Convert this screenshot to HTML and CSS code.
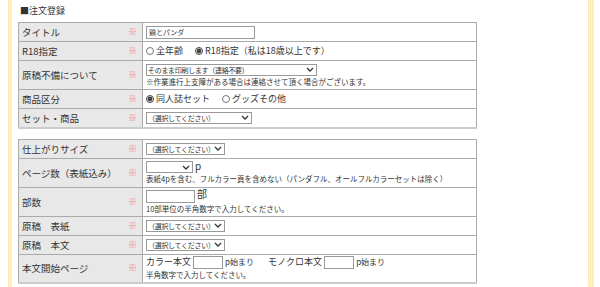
FILE: index.html
```html
<!DOCTYPE html>
<html lang="ja">
<head>
    <meta charset="UTF-8">
    <meta name="viewport" content="width=device-width, initial-scale=1.0">
    <title>注文登録</title>
    <link rel="stylesheet" href="styles.css">
</head>
<body>
    <div class="page">
        <div class="stripe stripe-left"></div>
        <div class="main">
            <h2 class="heading">■注文登録</h2>

            <table class="form-table">
                <tr class="row-s">
                    <th>タイトル<span class="req">※</span></th>
                    <td><input type="text" class="txt-title" value="鶏とパンダ"></td>
                </tr>
                <tr class="row-s">
                    <th>R18指定<span class="req">※</span></th>
                    <td>
                        <label class="radio"><input type="radio" name="r18">全年齢</label>
                        <label class="radio"><input type="radio" name="r18" checked>R18指定（私は18歳以上です）</label>
                    </td>
                </tr>
                <tr class="row-l">
                    <th>原稿不備について<span class="req">※</span></th>
                    <td>
                        <select class="sel-wide">
                            <option>そのまま印刷します（連絡不要）</option>
                        </select>
                        <div class="note">※作業進行上支障がある場合は連絡させて頂く場合がございます。</div>
                    </td>
                </tr>
                <tr class="row-s">
                    <th>商品区分<span class="req">※</span></th>
                    <td>
                        <label class="radio"><input type="radio" name="kind" checked>同人誌セット</label>
                        <label class="radio"><input type="radio" name="kind">グッズその他</label>
                    </td>
                </tr>
                <tr class="row-s">
                    <th>セット・商品<span class="req">※</span></th>
                    <td>
                        <select class="sel-set"><option>（選択してください）</option></select>
                    </td>
                </tr>
            </table>

            <table class="form-table">
                <tr class="row-s">
                    <th>仕上がりサイズ<span class="req">※</span></th>
                    <td><select class="sel-mid"><option>（選択してください）</option></select></td>
                </tr>
                <tr class="row-l">
                    <th>ページ数（表紙込み）<span class="req">※</span></th>
                    <td>
                        <select class="sel-small"><option></option></select> <span class="unit">p</span>
                        <div class="note">表紙4pを含む、フルカラー頁を含めない（パンダフル、オールフルカラーセットは除く）</div>
                    </td>
                </tr>
                <tr class="row-l">
                    <th>部数<span class="req">※</span></th>
                    <td>
                        <input type="text" class="txt-num"> <span class="unit">部</span>
                        <div class="note">10部単位の半角数字で入力してください。</div>
                    </td>
                </tr>
                <tr class="row-s">
                    <th>原稿　表紙<span class="req">※</span></th>
                    <td><select class="sel-mid"><option>（選択してください）</option></select></td>
                </tr>
                <tr class="row-s">
                    <th>原稿　本文<span class="req">※</span></th>
                    <td><select class="sel-mid"><option>（選択してください）</option></select></td>
                </tr>
                <tr class="row-l">
                    <th>本文開始ページ<span class="req">※</span></th>
                    <td>
                        カラー本文 <input type="text" class="txt-page"> <span class="small">p始まり</span>
                        <span class="gap">モノクロ本文</span> <input type="text" class="txt-page"> <span class="small">p始まり</span>
                        <div class="note">半角数字で入力してください。</div>
                    </td>
                </tr>
            </table>
        </div>
        <div class="stripe stripe-right"></div>
    </div>
</body>
</html>
```

FILE: styles.css
```css
body {
    margin: 0;
    background: #fff;
    font-family: "Noto Sans CJK JP", "Noto Sans", sans-serif;
    color: #333;
}
.page {
    display: flex;
    height: 287px;
    overflow: hidden;
}
.stripe {
    width: 4px;
    background-color: #fff;
    background-image:
        repeating-linear-gradient(0deg, #fdeec4 0 1px, transparent 1px 2px),
        repeating-linear-gradient(90deg, #fbe3a6 0 1px, #fff7e0 1px 2px);
}
.stripe-left {
    margin-left: 8px;
}
.stripe-right {
    margin-left: auto;
    margin-right: 6px;
    width: 6px;
}
.main {
    width: 458px;
    padding-left: 6px;
}
.heading {
    font-size: 9px;
    font-weight: normal;
    margin: 5px 0 0 2px;
    height: 17px;
    line-height: 11px;
}
.form-table {
    width: 459px;
    border-collapse: collapse;
    border-bottom: 2px solid #ccc;
    margin-bottom: 10px;
    font-size: 9px;
}
.form-table th,
.form-table td {
    border: 1px solid #aaa;
    padding: 0 3px;
    vertical-align: middle;
}
.form-table th {
    width: 117px;
    background: #e8e8e8;
    font-weight: normal;
    text-align: left;
    font-size: 9.5px;
    white-space: nowrap;
}
.form-table td {
    background: #fff;
    line-height: 10px;
}
.row-s {
    height: 19px;
}
.row-l {
    height: 29px;
}
.req {
    float: right;
    margin-right: 2px;
    color: #ee7f7f;
    font-size: 9px;
    font-weight: bold;
}
.radio {
    display: inline-flex;
    align-items: center;
    margin-right: 10px;
}
.radio input {
    width: 8px;
    height: 8px;
    margin: 0 2px 0 0;
    accent-color: #444;
}
input[type="text"],
select {
    font-family: inherit;
    font-size: 7px;
    height: 13px;
    padding: 0 2px;
    border: 1px solid #999;
    border-radius: 0;
    background: #fff;
    color: #333;
    box-sizing: border-box;
    vertical-align: middle;
}
select {
    -webkit-appearance: none;
    appearance: none;
    height: 12px;
    padding: 0 9px 0 1px;
    letter-spacing: -0.3px;
    background: #fff url("data:image/svg+xml,%3Csvg xmlns='http://www.w3.org/2000/svg' width='8' height='5' viewBox='0 0 8 5'%3E%3Cpath d='M1 1l3 3 3-3' fill='none' stroke='%23333' stroke-width='1.3'/%3E%3C/svg%3E") no-repeat right 2px center;
}
.txt-title {
    width: 109px;
}
.sel-wide {
    width: 171px;
}
.sel-set {
    width: 106px;
}
.sel-mid {
    width: 79px;
}
.sel-small {
    width: 47px;
}
.txt-num {
    width: 49px;
    height: 14px;
}
.txt-page {
    width: 30px;
    height: 14px;
}
.unit {
    font-size: 10px;
}
.small {
    font-size: 8px;
}
.gap {
    margin-left: 12px;
}
.note {
    font-size: 7.5px;
    line-height: 10px;
    margin-top: 1px;
}
```
